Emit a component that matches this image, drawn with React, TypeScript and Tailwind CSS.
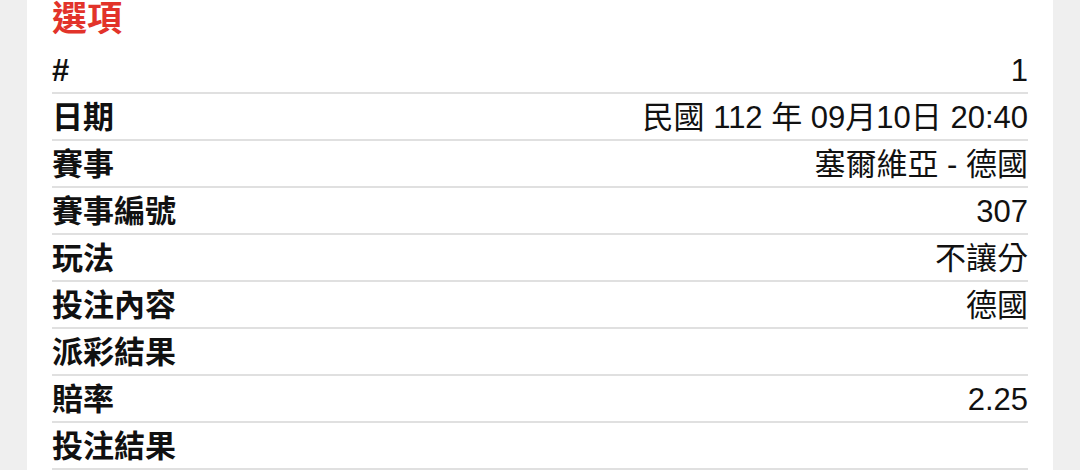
import React from 'react';

const rows: { label: string; value: string }[] = [
  { label: '#', value: '1' },
  { label: '日期', value: '民國 112 年 09月10日 20:40' },
  { label: '賽事', value: '塞爾維亞 - 德國' },
  { label: '賽事編號', value: '307' },
  { label: '玩法', value: '不讓分' },
  { label: '投注內容', value: '德國' },
  { label: '派彩結果', value: '' },
  { label: '賠率', value: '2.25' },
  { label: '投注結果', value: '' },
];

const App = () => {
  return (
    <div
      className="h-[470px] w-[1080px] overflow-hidden bg-[#efefef]"
      style={{ fontFamily: '"Liberation Sans", "Noto Sans CJK TC", sans-serif' }}
    >
      <div className="mx-[27px] h-full bg-white px-[25px]">
        <div className="flex h-[47px] items-center pb-[10px]">
          <h1 className="text-[35px] font-bold leading-none text-[#e2332a]">選項</h1>
        </div>
        {rows.map((row) => (
          <div
            key={row.label}
            className="flex h-[47px] items-center justify-between border-b-2 border-[#e0e0e0] pt-[2px] text-[31px] leading-none text-[#111]"
          >
            <span className="font-bold">{row.label}</span>
            <span>{row.value}</span>
          </div>
        ))}
      </div>
    </div>
  );
};

export default App;
